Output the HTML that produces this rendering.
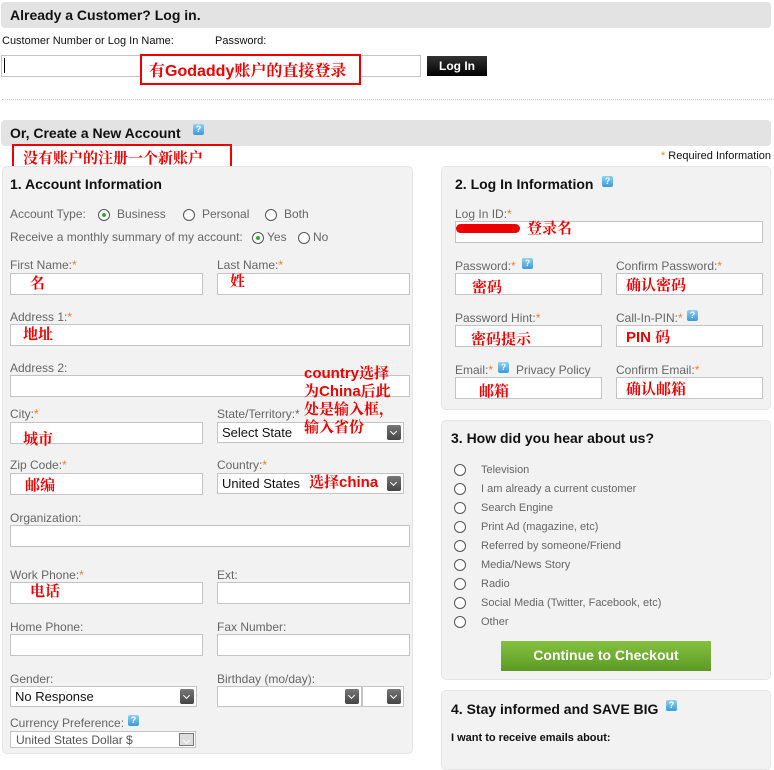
<!DOCTYPE html>
<html><head><meta charset="utf-8">
<style>
*{margin:0;padding:0;box-sizing:border-box}
body{width:774px;height:756px;position:relative;background:#fff;font-family:"Liberation Sans","Noto Sans CJK SC",sans-serif;overflow:hidden;color:#555}
.a{position:absolute;white-space:nowrap}
.bar{position:absolute;left:1px;width:770px;height:26px;background:#e3e3e3;border-radius:4px}
.h{font-weight:bold;color:#111;font-size:14px}
.l{font-size:12px;color:#666}
.s{color:#f07c2a}
.in{position:absolute;height:22px;background:#fff;border:1px solid #c4c4c4}
.sel{position:absolute;height:21px;background:#fff;border:1px solid #c4c4c4;font-size:13px;color:#111;padding:2px 0 0 4px;white-space:nowrap}
.arr{position:absolute;right:2px;top:2px;width:14px;height:15px;background:linear-gradient(#777,#444);border-radius:2px}
.arr:after{content:"";position:absolute;left:4px;top:4px;width:4px;height:4px;border-right:1.5px solid #fff;border-bottom:1.5px solid #fff;transform:rotate(45deg)}
.panel{position:absolute;background:#f2f2f2;border:1px solid #e4e4e4;border-radius:5px}
.r{color:#e00;font-family:"Liberation Sans","Noto Serif CJK SC",serif;font-weight:bold;font-size:15px}
.rbox{position:absolute;border:2px solid #e00}
.q{position:absolute;width:11px;height:11px;background:linear-gradient(#8fd0f5,#3d9ad8);border-radius:2px;color:#fff;font-size:9px;font-weight:bold;text-align:center;line-height:11px}
.rad{position:absolute;width:12px;height:12px;border:1px solid #555;border-radius:50%;background:#fff}
.rad.on:after{content:"";position:absolute;left:3px;top:3px;width:4px;height:4px;border-radius:50%;background:#3a3}
.o{font-size:11px;color:#666}
</style></head><body>

<div class="bar" style="top:2px"></div>
<div class="a h" style="left:10px;top:7px">Already a Customer? Log in.</div>
<div class="a" style="left:2px;top:35px;font-size:11px;color:#111">Customer Number or Log In Name:</div>
<div class="a" style="left:215px;top:35px;font-size:11px;color:#111">Password:</div>
<div class="in" style="left:1px;top:55px;width:206px;height:22px"></div>
<div class="a" style="left:4px;top:58px;width:1px;height:15px;background:#000"></div>
<div class="in" style="left:206px;top:55px;width:215px;height:22px"></div>
<div class="a" style="left:427px;top:56px;width:60px;height:20px;background:linear-gradient(#333,#000);color:#fff;font-weight:bold;font-size:12px;text-align:center;line-height:20px">Log In</div>
<div class="rbox" style="left:140px;top:54px;width:221px;height:31px;background:#fff"></div>
<div class="a r" style="left:149px;top:58px;font-size:16px">有Godaddy账户的直接登录</div>
<div class="a" style="left:2px;top:99px;width:770px;border-top:1px dotted #ccc"></div>

<div class="bar" style="top:120px"></div>
<div class="a h" style="left:10px;top:125px">Or, Create a New Account</div>
<div class="q" style="left:193px;top:124px">?</div>
<div class="rbox" style="left:12px;top:144px;width:220px;height:29px;background:#fff"></div>
<div class="a r" style="left:23px;top:147px">没有账户的注册一个新账户</div>
<div class="a" style="right:3px;top:150px;font-size:11px;color:#111"><span class="s">*</span> Required Information</div>

<!-- Panel 1 -->
<div class="panel" style="left:2px;top:166px;width:411px;height:588px"></div>
<div class="a h" style="left:10px;top:176px">1. Account Information</div>
<div class="a l" style="left:10px;top:207px">Account Type:</div>
<div class="rad on" style="left:98px;top:209px"></div><div class="a l" style="left:117px;top:207px">Business</div>
<div class="rad" style="left:183px;top:209px"></div><div class="a l" style="left:202px;top:207px">Personal</div>
<div class="rad" style="left:265px;top:209px"></div><div class="a l" style="left:284px;top:207px">Both</div>
<div class="a l" style="left:10px;top:230px">Receive a monthly summary of my account:</div>
<div class="rad on" style="left:252px;top:232px"></div><div class="a l" style="left:267px;top:230px">Yes</div>
<div class="rad" style="left:298px;top:232px"></div><div class="a l" style="left:313px;top:230px">No</div>

<div class="a l" style="left:10px;top:258px">First Name:<span class="s">*</span></div>
<div class="in" style="left:10px;top:273px;width:193px"></div><div class="a r" style="left:30px;top:272px">名</div>
<div class="a l" style="left:217px;top:258px">Last Name:<span class="s">*</span></div>
<div class="in" style="left:217px;top:273px;width:193px"></div><div class="a r" style="left:230px;top:270px">姓</div>

<div class="a l" style="left:10px;top:310px">Address 1:<span class="s">*</span></div>
<div class="in" style="left:10px;top:324px;width:400px"></div><div class="a r" style="left:23px;top:323px">地址</div>
<div class="a l" style="left:10px;top:361px">Address 2:</div>
<div class="in" style="left:10px;top:375px;width:400px"></div>

<div class="a l" style="left:10px;top:407px">City:<span class="s">*</span></div>
<div class="in" style="left:10px;top:422px;width:193px"></div><div class="a r" style="left:23px;top:428px">城市</div>
<div class="a l" style="left:217px;top:407px">State/Territory:*</div>
<div class="sel" style="left:217px;top:422px;width:187px">Select State<div class="arr"></div></div>

<div class="a l" style="left:10px;top:458px">Zip Code:<span class="s">*</span></div>
<div class="in" style="left:10px;top:473px;width:193px"></div><div class="a r" style="left:25px;top:474px">邮编</div>
<div class="a l" style="left:217px;top:458px">Country:<span class="s">*</span></div>
<div class="sel" style="left:217px;top:473px;width:187px">United States<div class="arr"></div></div>
<div class="a r" style="left:309px;top:471px">选择china</div>

<div class="a r" style="left:304px;top:365px;line-height:18px">country选择<br>为China后此<br>处是输入框，<br>输入省份</div>

<div class="a l" style="left:10px;top:511px">Organization:</div>
<div class="in" style="left:10px;top:525px;width:400px"></div>

<div class="a l" style="left:10px;top:568px">Work Phone:<span class="s">*</span></div>
<div class="in" style="left:10px;top:582px;width:193px"></div><div class="a r" style="left:30px;top:580px">电话</div>
<div class="a l" style="left:217px;top:568px">Ext:</div>
<div class="in" style="left:217px;top:582px;width:193px"></div>

<div class="a l" style="left:10px;top:620px">Home Phone:</div>
<div class="in" style="left:10px;top:634px;width:193px"></div>
<div class="a l" style="left:217px;top:620px">Fax Number:</div>
<div class="in" style="left:217px;top:634px;width:193px"></div>

<div class="a l" style="left:10px;top:672px">Gender:</div>
<div class="sel" style="left:10px;top:686px;width:187px">No Response<div class="arr"></div></div>
<div class="a l" style="left:217px;top:672px">Birthday (mo/day):</div>
<div class="sel" style="left:217px;top:686px;width:145px"><div class="arr"></div></div>
<div class="sel" style="left:362px;top:686px;width:42px"><div class="arr"></div></div>

<div class="a l" style="left:10px;top:716px">Currency Preference:</div>
<div class="q" style="left:128px;top:715px">?</div>
<div class="sel" style="left:10px;top:731px;width:186px;height:17px;font-size:12px;color:#555;padding:1px 0 0 5px">United States Dollar $<div class="arr" style="top:1px;right:1px;width:15px;height:13px;background:#ddd;border:1px solid #777;border-radius:0"></div></div>

<!-- Panel 2 -->
<div class="panel" style="left:441px;top:166px;width:330px;height:244px"></div>
<div class="a h" style="left:455px;top:176px">2. Log In Information</div>
<div class="q" style="left:602px;top:176px">?</div>
<div class="a l" style="left:455px;top:207px">Log In ID:<span class="s">*</span></div>
<div class="in" style="left:455px;top:221px;width:308px"></div>
<div class="a" style="left:456px;top:224px;width:64px;height:9px;background:#e00;border-radius:5px"></div>
<div class="a r" style="left:527px;top:217px">登录名</div>

<div class="a l" style="left:455px;top:259px">Password:<span class="s">*</span></div><div class="q" style="left:522px;top:258px">?</div>
<div class="in" style="left:455px;top:273px;width:147px"></div><div class="a r" style="left:472px;top:276px">密码</div>
<div class="a l" style="left:616px;top:259px">Confirm Password:<span class="s">*</span></div>
<div class="in" style="left:616px;top:273px;width:147px"></div><div class="a r" style="left:626px;top:274px">确认密码</div>

<div class="a l" style="left:455px;top:311px">Password Hint:<span class="s">*</span></div>
<div class="in" style="left:455px;top:325px;width:147px"></div><div class="a r" style="left:471px;top:328px">密码提示</div>
<div class="a l" style="left:616px;top:311px">Call-In-PIN:<span class="s">*</span></div><div class="q" style="left:687px;top:310px">?</div>
<div class="in" style="left:616px;top:325px;width:147px"></div><div class="a r" style="left:626px;top:326px">PIN 码</div>

<div class="a l" style="left:455px;top:363px">Email:<span class="s">*</span></div><div class="q" style="left:498px;top:362px">?</div>
<div class="a l" style="left:516px;top:363px;border-bottom:1px dashed #888">Privacy Policy</div>
<div class="in" style="left:455px;top:377px;width:147px"></div><div class="a r" style="left:479px;top:380px">邮箱</div>
<div class="a l" style="left:616px;top:363px">Confirm Email:<span class="s">*</span></div>
<div class="in" style="left:616px;top:377px;width:147px"></div><div class="a r" style="left:626px;top:378px">确认邮箱</div>

<!-- Panel 3 -->
<div class="panel" style="left:441px;top:420px;width:330px;height:260px"></div>
<div class="a h" style="left:451px;top:430px">3. How did you hear about us?</div>
<div class="rad" style="left:454px;top:464px"></div><div class="a o" style="left:481px;top:464px">Television</div>
<div class="rad" style="left:454px;top:483px"></div><div class="a o" style="left:481px;top:483px">I am already a current customer</div>
<div class="rad" style="left:454px;top:502px"></div><div class="a o" style="left:481px;top:502px">Search Engine</div>
<div class="rad" style="left:454px;top:521px"></div><div class="a o" style="left:481px;top:521px">Print Ad (magazine, etc)</div>
<div class="rad" style="left:454px;top:540px"></div><div class="a o" style="left:481px;top:540px">Referred by someone/Friend</div>
<div class="rad" style="left:454px;top:559px"></div><div class="a o" style="left:481px;top:559px">Media/News Story</div>
<div class="rad" style="left:454px;top:578px"></div><div class="a o" style="left:481px;top:578px">Radio</div>
<div class="rad" style="left:454px;top:597px"></div><div class="a o" style="left:481px;top:597px">Social Media (Twitter, Facebook, etc)</div>
<div class="rad" style="left:454px;top:616px"></div><div class="a o" style="left:481px;top:616px">Other</div>
<div class="a" style="left:501px;top:641px;width:210px;height:30px;background:linear-gradient(#86c140,#5c9a25);color:#fff;font-weight:bold;font-size:14px;text-align:center;line-height:28px">Continue to Checkout</div>

<!-- Panel 4 -->
<div class="panel" style="left:441px;top:690px;width:330px;height:80px"></div>
<div class="a h" style="left:451px;top:701px">4. Stay informed and SAVE BIG</div>
<div class="q" style="left:666px;top:700px">?</div>
<div class="a" style="left:451px;top:732px;font-size:11px;font-weight:bold;color:#111">I want to receive emails about:</div>
</body></html>
